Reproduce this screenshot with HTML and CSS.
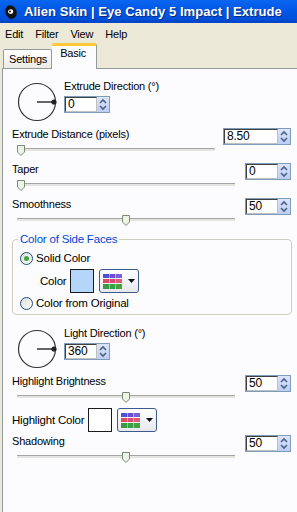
FILE: index.html
```html
<!DOCTYPE html>
<html lang="en">
<head>
    <meta charset="UTF-8">
    <title>Extrude</title>
    <link rel="stylesheet" href="styles.css">
</head>
<body>
    <div class="titlebar">
        <svg class="app-icon" width="14" height="16" viewBox="0 0 14 16">
            <ellipse cx="7" cy="8" rx="5.5" ry="7" transform="rotate(-20 7 8)" fill="#111"/>
            <path d="M4 7 Q6 4 9 6 Q10 9 7 10 Q4 10 4 7 Z" fill="#fff"/>
            <circle cx="6" cy="7.5" r="1" fill="#111"/>
        </svg>
        <span>Alien Skin | Eye Candy 5 Impact | Extrude</span>
    </div>

    <div class="menubar">
        <span>Edit</span>
        <span>Filter</span>
        <span>View</span>
        <span>Help</span>
    </div>

    <div class="tabs">
        <div class="tab">Settings</div>
        <div class="tab active">Basic</div>
    </div>

    <div class="panel">
        <div class="dial-row">
            <svg class="dial" width="40" height="40" viewBox="0 0 40 40">
                <circle cx="20" cy="20" r="18.5" fill="none" stroke="#333" stroke-width="1.2"/>
                <line x1="20" y1="20" x2="37" y2="20" stroke="#333" stroke-width="1.5"/>
                <circle cx="37" cy="20" r="2.6" fill="#222"/>
            </svg>
            <div class="dial-field">
                <div class="field-label">Extrude Direction (°)</div>
                <div class="spin">
                    <span class="spin-val">0</span>
                    <span class="spin-btns"><svg width="12" height="15" viewBox="0 0 12 15"><path d="M3 6 L6 3 L9 6" fill="none" stroke="#4d6185" stroke-width="1.6"/><path d="M3 9 L6 12 L9 9" fill="none" stroke="#4d6185" stroke-width="1.6"/></svg></span>
                </div>
            </div>
        </div>

        <div class="slider-row">
            <div class="slider-col short">
                <div class="field-label">Extrude Distance (pixels)</div>
                <div class="track"><span class="thumb" style="left: 0"><svg width="8" height="11" viewBox="0 0 8 11"><path d="M0.5 0.5 H7.5 V7 L4 10.5 L0.5 7 Z" fill="#eef3e8" stroke="#7e8a78"/></svg></span></div>
            </div>
            <div class="spin wide">
                <span class="spin-val">8.50</span>
                <span class="spin-btns"><svg width="12" height="15" viewBox="0 0 12 15"><path d="M3 6 L6 3 L9 6" fill="none" stroke="#4d6185" stroke-width="1.6"/><path d="M3 9 L6 12 L9 9" fill="none" stroke="#4d6185" stroke-width="1.6"/></svg></span>
            </div>
        </div>

        <div class="slider-row">
            <div class="slider-col">
                <div class="field-label">Taper</div>
                <div class="track"><span class="thumb" style="left: 0"><svg width="8" height="11" viewBox="0 0 8 11"><path d="M0.5 0.5 H7.5 V7 L4 10.5 L0.5 7 Z" fill="#eef3e8" stroke="#7e8a78"/></svg></span></div>
            </div>
            <div class="spin">
                <span class="spin-val">0</span>
                <span class="spin-btns"><svg width="12" height="15" viewBox="0 0 12 15"><path d="M3 6 L6 3 L9 6" fill="none" stroke="#4d6185" stroke-width="1.6"/><path d="M3 9 L6 12 L9 9" fill="none" stroke="#4d6185" stroke-width="1.6"/></svg></span>
            </div>
        </div>

        <div class="slider-row">
            <div class="slider-col">
                <div class="field-label">Smoothness</div>
                <div class="track"><span class="thumb" style="left: calc(50% - 4px)"><svg width="8" height="11" viewBox="0 0 8 11"><path d="M0.5 0.5 H7.5 V7 L4 10.5 L0.5 7 Z" fill="#eef3e8" stroke="#7e8a78"/></svg></span></div>
            </div>
            <div class="spin">
                <span class="spin-val">50</span>
                <span class="spin-btns"><svg width="12" height="15" viewBox="0 0 12 15"><path d="M3 6 L6 3 L9 6" fill="none" stroke="#4d6185" stroke-width="1.6"/><path d="M3 9 L6 12 L9 9" fill="none" stroke="#4d6185" stroke-width="1.6"/></svg></span>
            </div>
        </div>

        <fieldset class="group">
            <legend>Color of Side Faces</legend>
            <div class="radio-line"><span class="radio checked"></span>Solid Color</div>
            <div class="color-line">
                <span class="color-label">Color</span>
                <span class="swatch blue"></span>
                <span class="color-btn">
                    <svg width="19" height="15" viewBox="0 0 19 15">
                        <rect x="0" y="0" width="6" height="4" fill="#4a52d8"/>
                        <rect x="6.5" y="0" width="6" height="4" fill="#6b4fd0"/>
                        <rect x="13" y="0" width="6" height="4" fill="#7a60d8"/>
                        <rect x="0" y="5" width="6" height="4" fill="#e04a60"/>
                        <rect x="6.5" y="5" width="6" height="4" fill="#d84a7a"/>
                        <rect x="13" y="5" width="6" height="4" fill="#e05a70"/>
                        <rect x="0" y="10" width="6" height="5" fill="#3a9a40"/>
                        <rect x="6.5" y="10" width="6" height="5" fill="#38a048"/>
                        <rect x="13" y="10" width="6" height="5" fill="#48a040"/>
                    </svg>
                    <svg class="caret" width="7" height="4" viewBox="0 0 7 4"><path d="M0 0 H7 L3.5 4 Z" fill="#111"/></svg>
                </span>
            </div>
            <div class="radio-line"><span class="radio"></span>Color from Original</div>
        </fieldset>

        <div class="dial-row light">
            <svg class="dial" width="40" height="40" viewBox="0 0 40 40">
                <circle cx="20" cy="20" r="18.5" fill="none" stroke="#333" stroke-width="1.2"/>
                <line x1="20" y1="20" x2="37" y2="20" stroke="#333" stroke-width="1.5"/>
                <circle cx="37" cy="20" r="2.6" fill="#222"/>
            </svg>
            <div class="dial-field">
                <div class="field-label">Light Direction (°)</div>
                <div class="spin">
                    <span class="spin-val">360</span>
                    <span class="spin-btns"><svg width="12" height="15" viewBox="0 0 12 15"><path d="M3 6 L6 3 L9 6" fill="none" stroke="#4d6185" stroke-width="1.6"/><path d="M3 9 L6 12 L9 9" fill="none" stroke="#4d6185" stroke-width="1.6"/></svg></span>
                </div>
            </div>
        </div>

        <div class="slider-row">
            <div class="slider-col">
                <div class="field-label">Highlight Brightness</div>
                <div class="track"><span class="thumb" style="left: calc(50% - 4px)"><svg width="8" height="11" viewBox="0 0 8 11"><path d="M0.5 0.5 H7.5 V7 L4 10.5 L0.5 7 Z" fill="#eef3e8" stroke="#7e8a78"/></svg></span></div>
            </div>
            <div class="spin">
                <span class="spin-val">50</span>
                <span class="spin-btns"><svg width="12" height="15" viewBox="0 0 12 15"><path d="M3 6 L6 3 L9 6" fill="none" stroke="#4d6185" stroke-width="1.6"/><path d="M3 9 L6 12 L9 9" fill="none" stroke="#4d6185" stroke-width="1.6"/></svg></span>
            </div>
        </div>

        <div class="color-line highlight">
            <span class="color-label">Highlight Color</span>
            <span class="swatch"></span>
            <span class="color-btn">
                <svg width="19" height="15" viewBox="0 0 19 15">
                    <rect x="0" y="0" width="6" height="4" fill="#4a52d8"/>
                    <rect x="6.5" y="0" width="6" height="4" fill="#6b4fd0"/>
                    <rect x="13" y="0" width="6" height="4" fill="#7a60d8"/>
                    <rect x="0" y="5" width="6" height="4" fill="#e04a60"/>
                    <rect x="6.5" y="5" width="6" height="4" fill="#d84a7a"/>
                    <rect x="13" y="5" width="6" height="4" fill="#e05a70"/>
                    <rect x="0" y="10" width="6" height="5" fill="#3a9a40"/>
                    <rect x="6.5" y="10" width="6" height="5" fill="#38a048"/>
                    <rect x="13" y="10" width="6" height="5" fill="#48a040"/>
                </svg>
                <svg class="caret" width="7" height="4" viewBox="0 0 7 4"><path d="M0 0 H7 L3.5 4 Z" fill="#111"/></svg>
            </span>
        </div>

        <div class="slider-row last">
            <div class="slider-col">
                <div class="field-label">Shadowing</div>
                <div class="track"><span class="thumb" style="left: calc(50% - 4px)"><svg width="8" height="11" viewBox="0 0 8 11"><path d="M0.5 0.5 H7.5 V7 L4 10.5 L0.5 7 Z" fill="#eef3e8" stroke="#7e8a78"/></svg></span></div>
            </div>
            <div class="spin">
                <span class="spin-val">50</span>
                <span class="spin-btns"><svg width="12" height="15" viewBox="0 0 12 15"><path d="M3 6 L6 3 L9 6" fill="none" stroke="#4d6185" stroke-width="1.6"/><path d="M3 9 L6 12 L9 9" fill="none" stroke="#4d6185" stroke-width="1.6"/></svg></span>
            </div>
        </div>
    </div>
</body>
</html>
```

FILE: styles.css
```css
body {
    margin: 0;
    width: 297px;
    height: 512px;
    overflow: hidden;
    font-family: "Liberation Sans", Arial, sans-serif;
    font-size: 11px;
    letter-spacing: -0.2px;
    color: #000;
    background-color: #ece9d8;
}
.titlebar {
    height: 23px;
    display: flex;
    align-items: center;
    gap: 6px;
    padding-left: 4px;
    background: linear-gradient(#0a66f0, #0058e6 40%, #0050dc 80%, #0042c4);
    color: #fff;
    font-weight: bold;
    font-size: 13px;
    letter-spacing: 0.05px;
    text-shadow: 1px 1px 0 #0a2a80;
}
.menubar {
    height: 22px;
    display: flex;
    align-items: center;
    gap: 12px;
    padding-left: 5px;
    font-size: 11px;
}
.tabs {
    height: 23px;
    display: flex;
    align-items: flex-end;
    padding-left: 3px;
}
.tab {
    height: 18px;
    padding: 0 4px 0 5px;
    display: flex;
    align-items: center;
    border: 1px solid #919b9c;
    border-bottom: none;
    border-radius: 2px 2px 0 0;
    background: linear-gradient(#fff, #ecebe5);
}
.tab.active {
    height: 20px;
    padding: 1px 10px 2px 8px;
    align-items: flex-start;
    background: #fcfcfe;
    border-top: 3px solid #ffc83c;
    border-left: none;
    position: relative;
    top: 1px;
}
.panel {
    height: 450px;
    margin-left: 2px;
    border-left: 1px solid #919b9c;
    border-top: 1px solid #919b9c;
    background: #fcfcfe;
    padding-top: 11px;
}
.dial-row {
    display: flex;
    align-items: flex-start;
    padding-left: 14px;
    gap: 7px;
}
.dial {
    margin-top: 2px;
}
.dial-field {
    display: flex;
    flex-direction: column;
    gap: 3px;
}
.field-label {
    height: 13px;
    line-height: 13px;
}
.spin {
    display: flex;
    height: 15px;
    border: 1px solid #7f9db9;
    background: #fff;
    width: 44px;
}
.spin.wide {
    width: 66px;
}
.spin-val {
    flex: 1;
    border: 1px solid #404040;
    border-right: 1px solid #c0c0c0;
    border-bottom: 1px solid #c0c0c0;
    padding-left: 2px;
    line-height: 13px;
    font-size: 12px;
}
.spin-btns {
    width: 12px;
    display: flex;
    background: linear-gradient(#dbe5fb, #bccdf4);
}
.slider-row {
    display: flex;
    align-items: flex-start;
    padding-left: 9px;
    padding-right: 6px;
    gap: 10px;
    margin-top: 6px;
}
.slider-col {
    flex: 1;
}
.slider-col.short {
    margin-right: -2px;
}
.track {
    position: relative;
    margin: 7px 0 6px 5px;
    height: 2px;
    border-top: 1px solid #a5a5a5;
    background: #e4e4e0;
}
.thumb {
    position: absolute;
    top: -4px;
    line-height: 0;
}
.group {
    margin: 6px 5px 0 9px;
    padding: 6px 0 4px 7px;
    border: 1px solid #d0d0bf;
    border-radius: 4px;
}
.group legend {
    color: #0046d5;
    padding: 0 2px;
    margin-left: -2px;
    font-size: 11.5px;
}
.radio-line {
    display: flex;
    align-items: center;
    gap: 3px;
    height: 14px;
    font-size: 11.5px;
}
.radio {
    width: 11px;
    height: 11px;
    border: 1px solid #1c5180;
    border-radius: 50%;
    background: linear-gradient(135deg, #dcdcd6, #fff);
    display: flex;
    align-items: center;
    justify-content: center;
}
.radio.checked::after {
    content: "";
    width: 5px;
    height: 5px;
    border-radius: 50%;
    background: #3ca83c;
}
.color-line {
    display: flex;
    align-items: center;
    height: 24px;
    margin: 4px 0 3px 20px;
    font-size: 11.5px;
}
.color-label {
    margin-right: 4px;
}
.swatch {
    width: 22px;
    height: 22px;
    border: 1px solid #1a1a1a;
    background: #fff;
    margin-right: 5px;
}
.swatch.blue {
    background: #b4d6fa;
}
.color-btn {
    width: 40px;
    height: 24px;
    border: 1px solid #3c5a8c;
    border-radius: 3px;
    background: linear-gradient(#fff, #e6e8ee);
    display: flex;
    align-items: center;
    padding-left: 3px;
    gap: 6px;
    box-sizing: border-box;
}
.dial-row.light {
    margin-top: 12px;
}
.color-line.highlight {
    margin: 4px 0 0 9px;
}
.slider-row.last {
    margin-top: 3px;
}
```
